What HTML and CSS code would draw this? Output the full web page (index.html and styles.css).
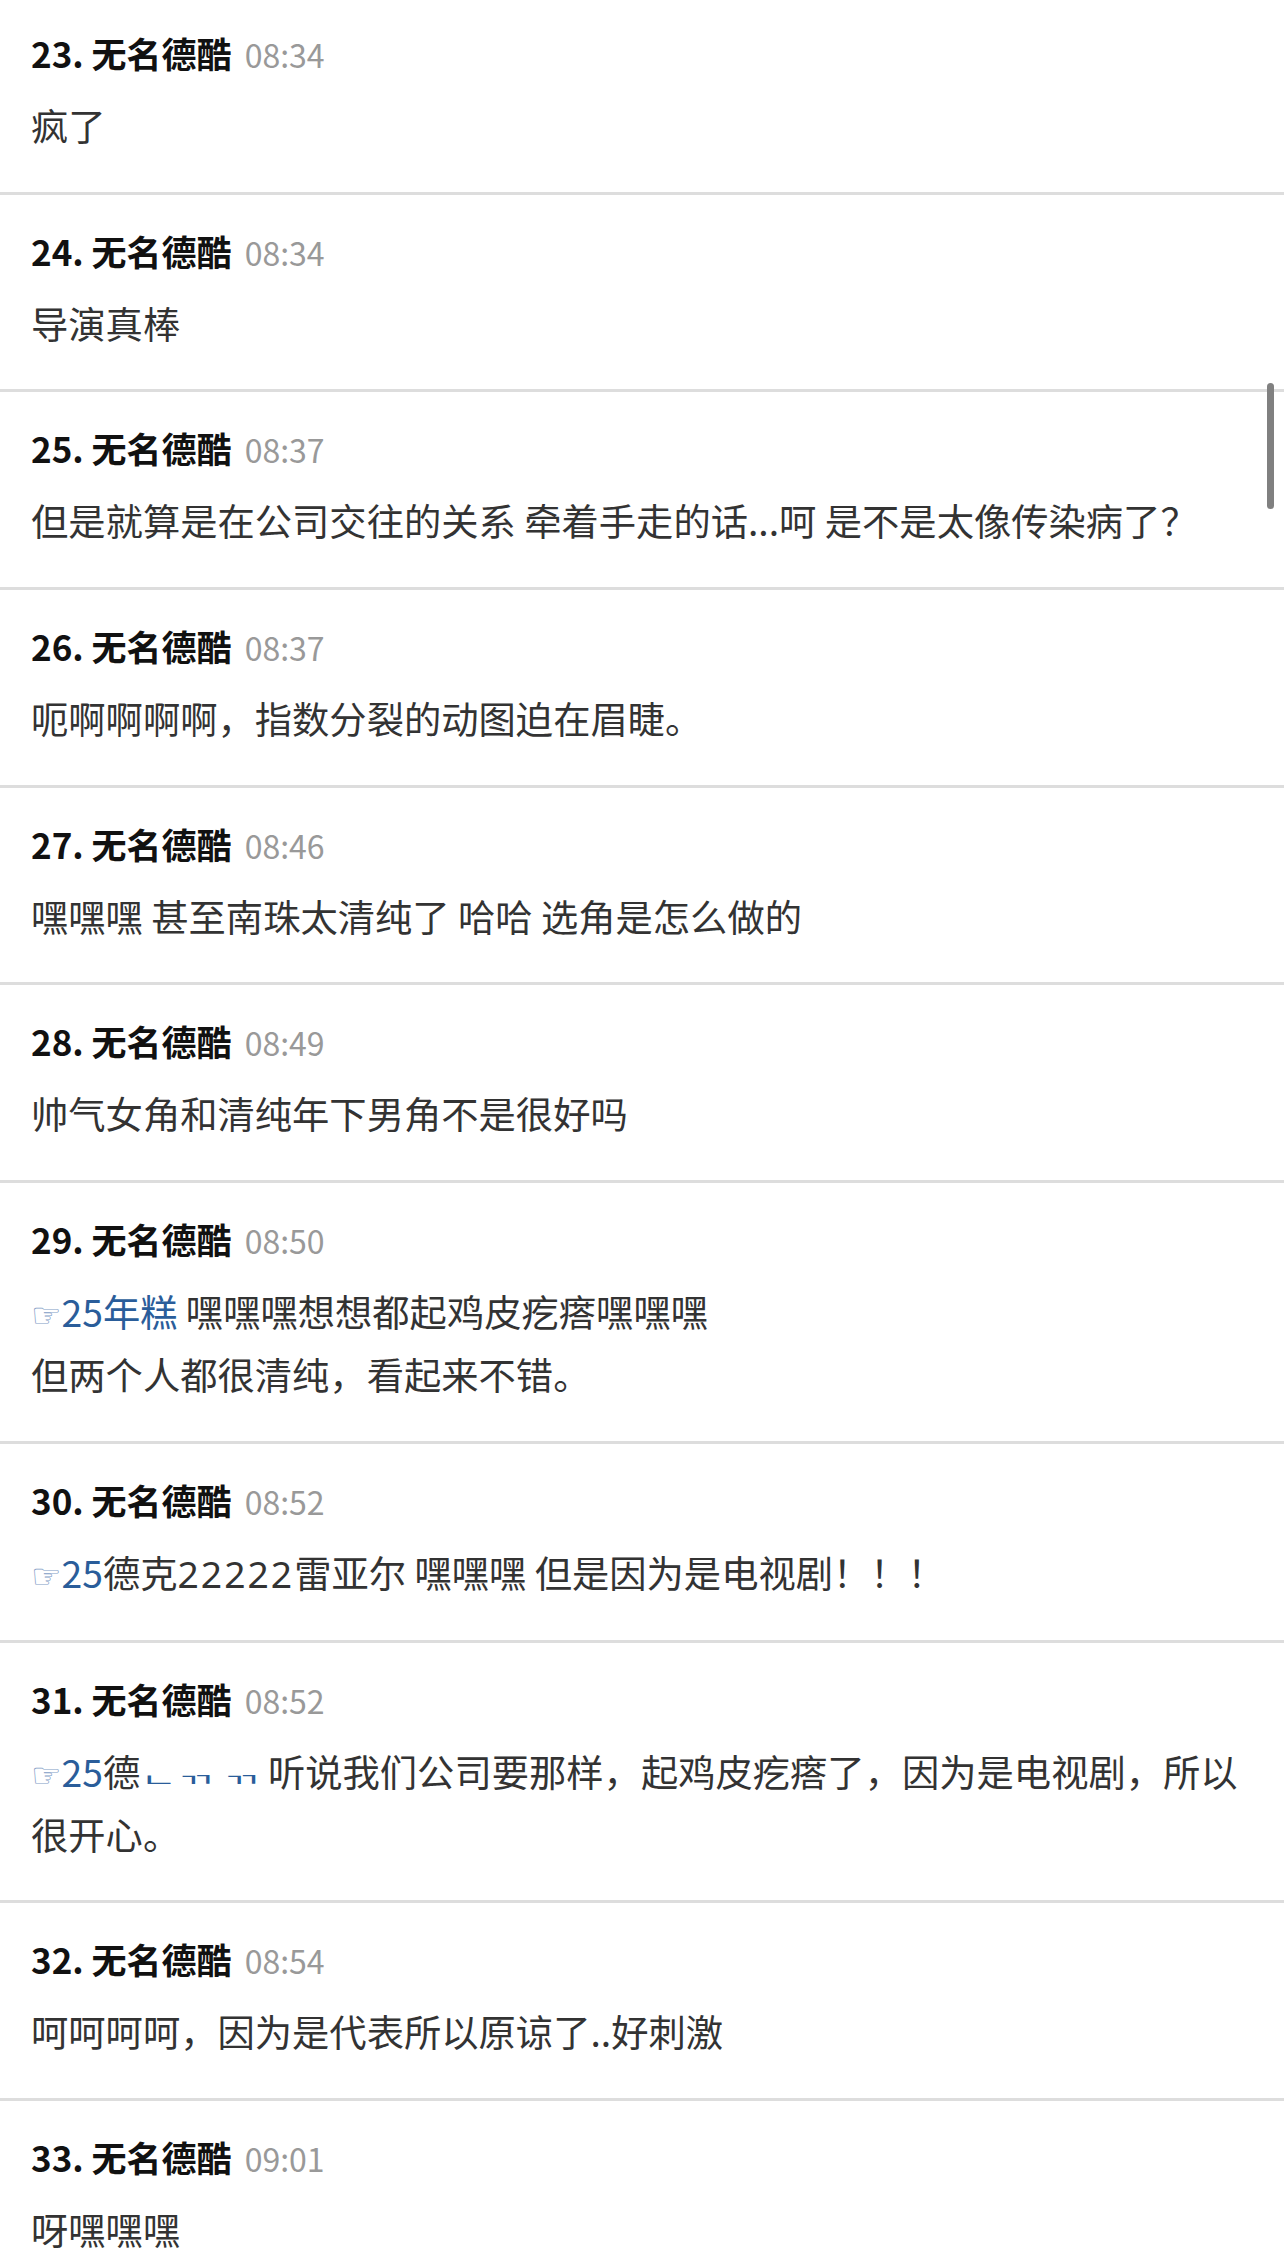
FILE: index.html
```html
<!DOCTYPE html>
<html lang="zh-CN">
<head>
<meta charset="utf-8">
<title>评论</title>
<link rel="stylesheet" href="styles.css">
</head>
<body>
<ul class="comments">
  <li class="comment">
    <div class="meta"><span class="author">23. 无名德酷</span><span class="time">08:34</span></div>
    <div class="text">疯了</div>
  </li>
  <li class="comment">
    <div class="meta"><span class="author">24. 无名德酷</span><span class="time">08:34</span></div>
    <div class="text">导演真棒</div>
  </li>
  <li class="comment">
    <div class="meta"><span class="author">25. 无名德酷</span><span class="time">08:37</span></div>
    <div class="text">但是就算是在公司交往的关系 牵着手走的话...呵 是不是太像传染病了？</div>
  </li>
  <li class="comment">
    <div class="meta"><span class="author">26. 无名德酷</span><span class="time">08:37</span></div>
    <div class="text">呃啊啊啊啊，指数分裂的动图迫在眉睫。</div>
  </li>
  <li class="comment">
    <div class="meta"><span class="author">27. 无名德酷</span><span class="time">08:46</span></div>
    <div class="text">嘿嘿嘿 甚至南珠太清纯了 哈哈 选角是怎么做的</div>
  </li>
  <li class="comment">
    <div class="meta"><span class="author">28. 无名德酷</span><span class="time">08:49</span></div>
    <div class="text">帅气女角和清纯年下男角不是很好吗</div>
  </li>
  <li class="comment">
    <div class="meta"><span class="author">29. 无名德酷</span><span class="time">08:50</span></div>
    <div class="text"><span class="hand">☞</span><span class="ref">25年糕</span> 嘿嘿嘿想想都起鸡皮疙瘩嘿嘿嘿<br>但两个人都很清纯，看起来不错。</div>
  </li>
  <li class="comment">
    <div class="meta"><span class="author">30. 无名德酷</span><span class="time">08:52</span></div>
    <div class="text"><span class="hand">☞</span><span class="ref">25</span>德克<span class="num">22222</span>雷亚尔 嘿嘿嘿 但是因为是电视剧！！！</div>
  </li>
  <li class="comment">
    <div class="meta"><span class="author">31. 无名德酷</span><span class="time">08:52</span></div>
    <div class="text"><span class="hand">☞</span><span class="ref">25</span>德<span class="ref jamo">ㄴㄲ ㄲ</span> 听说我们公司要那样，起鸡皮疙瘩了，因为是电视剧，所以很开心。</div>
  </li>
  <li class="comment">
    <div class="meta"><span class="author">32. 无名德酷</span><span class="time">08:54</span></div>
    <div class="text">呵呵呵呵，因为是代表所以原谅了..好刺激</div>
  </li>
  <li class="comment">
    <div class="meta"><span class="author">33. 无名德酷</span><span class="time">09:01</span></div>
    <div class="text">呀嘿嘿嘿</div>
  </li>
</ul>
<div class="scrollbar"></div>
</body>
</html>
```

FILE: styles.css
```css
html, body {
  margin: 0;
  padding: 0;
  background: #ffffff;
}

body {
  font-family: "Noto Sans CJK SC", "Noto Sans", sans-serif;
  color: #333333;
  overflow: hidden;
  height: 2248px;
}

.comments {
  list-style: none;
  margin: -6px 0 0 0;
  padding: 0;
}

.comment {
  border-top: 3px solid #dddddd;
  padding: 31px 31px 34.7px 31px;
}

.meta {
  display: flex;
  align-items: baseline;
  gap: 13px;
  height: 50px;
  line-height: 50px;
  margin-bottom: 16px;
}

.author {
  font-size: 35px;
  font-weight: 700;
  color: #111111;
}

.time {
  font-size: 32px;
  color: #999999;
}

.text {
  font-size: 37.3px;
  line-height: 63px;
  color: #333333;
  text-spacing-trim: space-all;
}

.hand {
  font-family: "DejaVu Sans", sans-serif;
  font-size: 34px;
  line-height: 0;
  color: #7f9dc6;
}

.ref {
  color: #2a5d9a;
}

.num {
  font-family: "Noto Sans", sans-serif;
  letter-spacing: 2px;
}

.jamo {
  display: inline-block;
  font-family: "Noto Sans CJK KR", sans-serif;
  font-size: 40px;
  line-height: 1;
  transform: scaleY(0.42);
  transform-origin: 50% 88%;
}

.scrollbar {
  position: fixed;
  top: 383px;
  right: 10px;
  width: 7px;
  height: 126px;
  border-radius: 4px;
  background: #808080;
}
```
